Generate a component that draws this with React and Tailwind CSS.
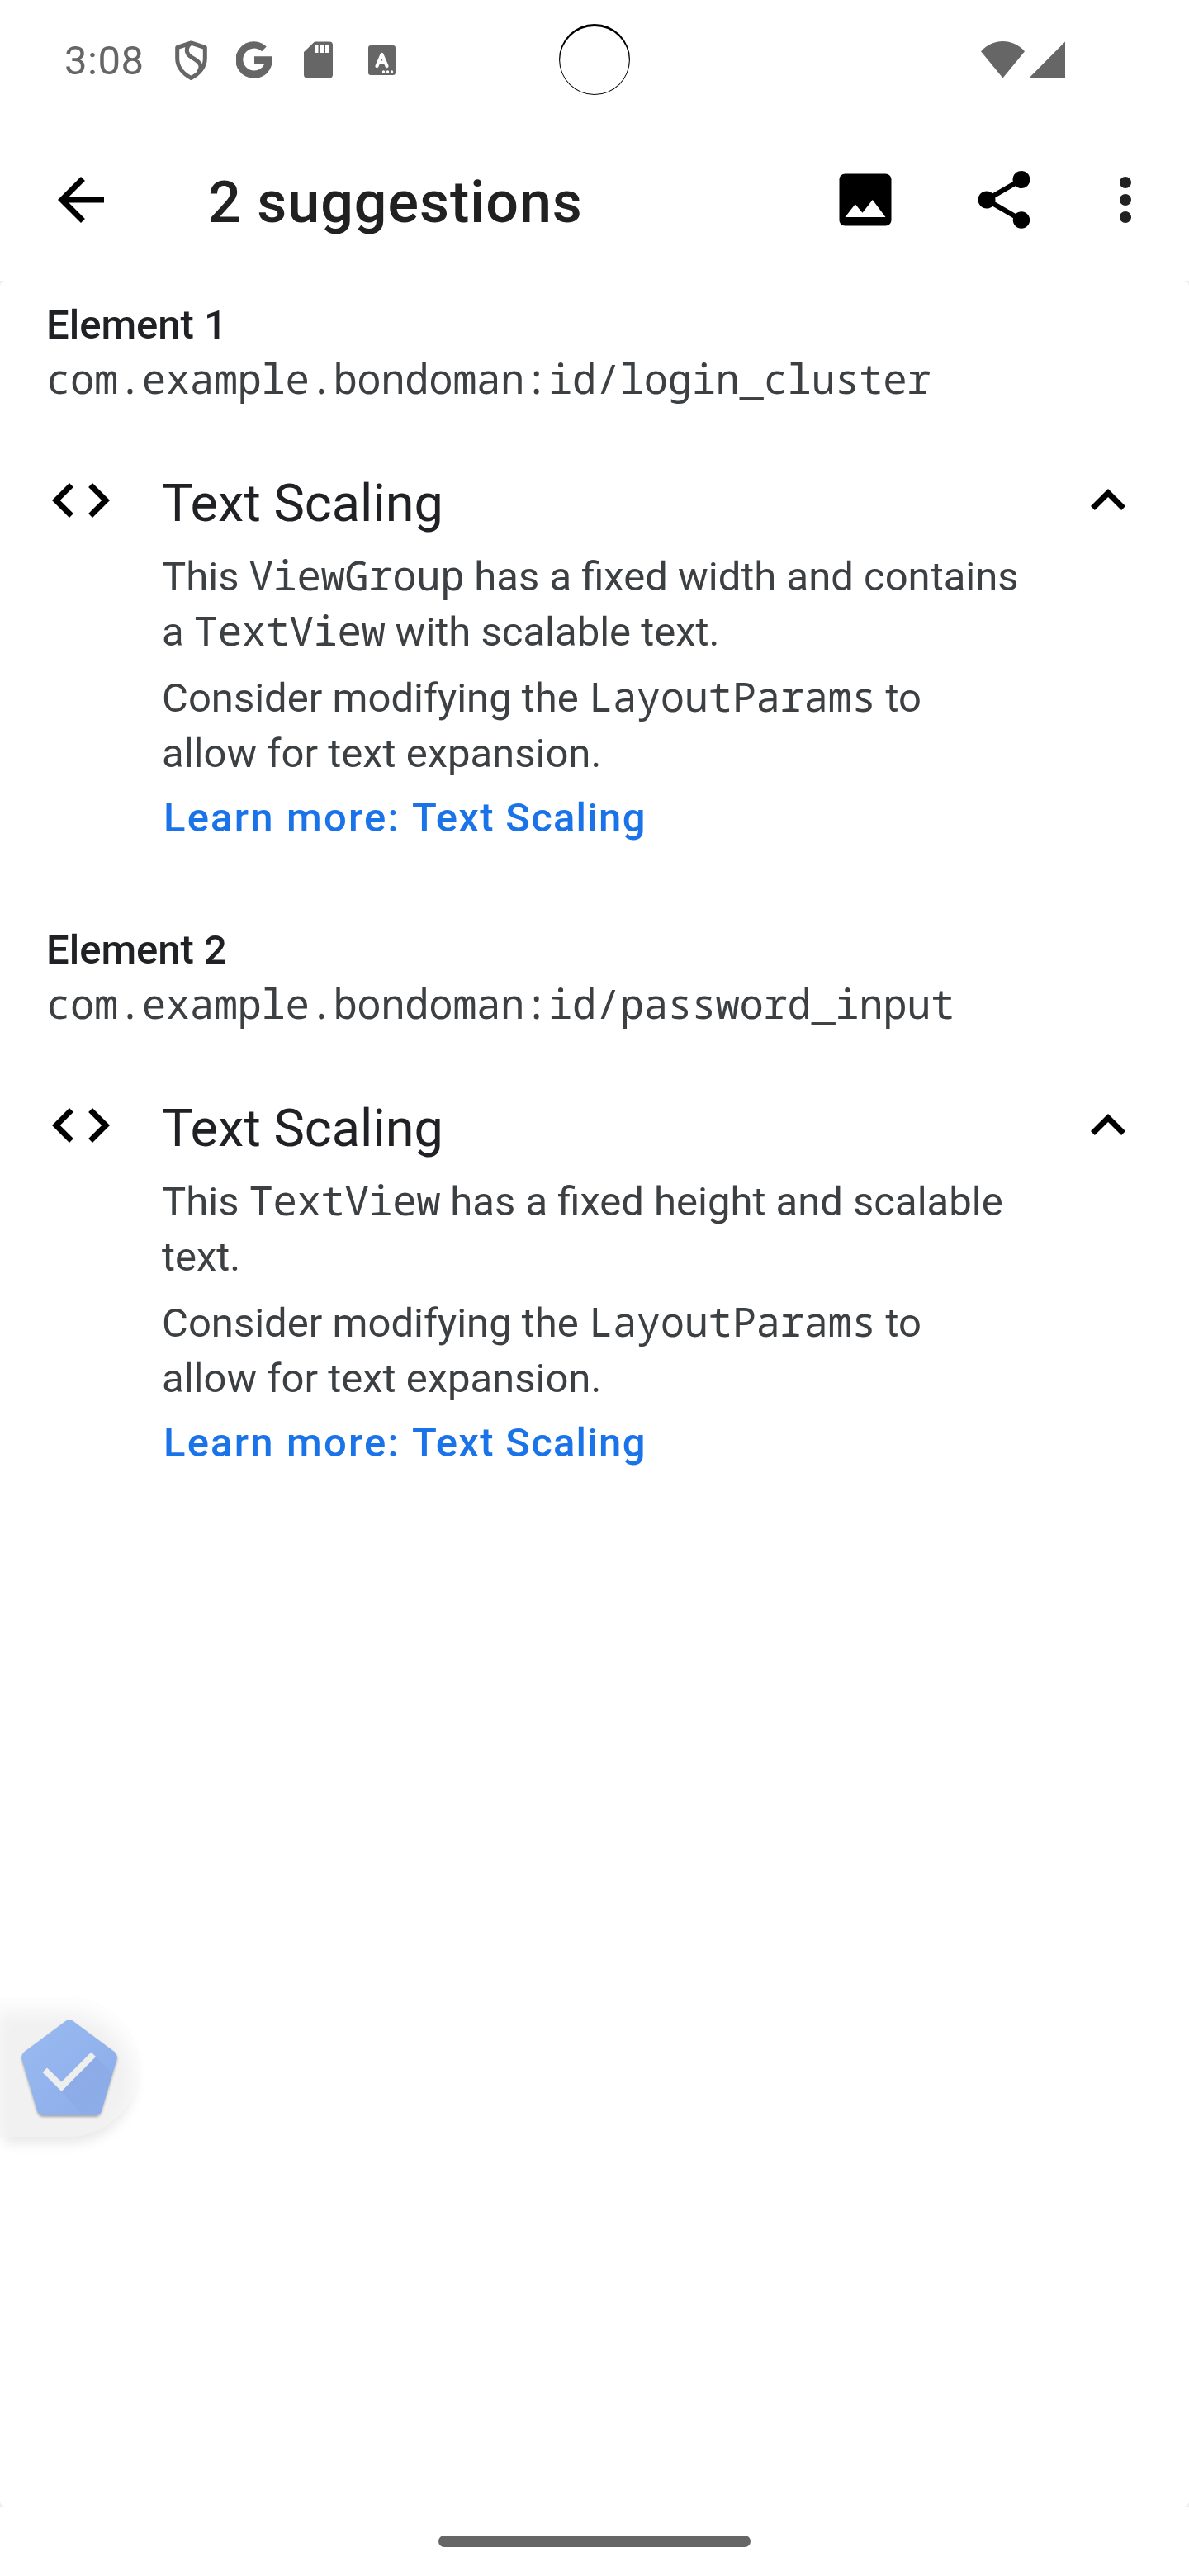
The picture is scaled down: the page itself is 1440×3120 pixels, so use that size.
function Icon({ d, className = "fill-black" }) {
  return (
    <svg viewBox="0 0 24 24" className={"size-[84px] shrink-0 " + className}>
      <path d={d} />
    </svg>
  );
}

function Code({ children }) {
  return (
    <span className="font-['Droid_Sans_Mono','Noto_Sans_Mono','DejaVu_Sans_Mono',monospace] text-[49px] leading-none tracking-[-0.45px]">{children}</span>
  );
}

function StatusBar() {
  return (
    <div className="relative flex h-[145px] items-center pl-[78px] text-[#666]">
      <span className="w-[134px] pt-px text-[49px] leading-[57px] tracking-[0.5px]">3:08</span>
      <svg viewBox="0 0 39 48" className="h-12 w-[39px]" fill="none" stroke="currentColor" strokeWidth="5" strokeLinejoin="round">
        <path d="M19.5 3 36.300 8.500V22c0 10-7 18.500-16.800 23.500C9.700 40.500 2.700 32 2.700 22V8.500z" />
        <path d="M19 3.500c-5 3-6 9-3 13.500 4 5 14 7 15 14 .3 3-.8 5-2.500 7" />
      </svg>
      <svg viewBox="0 0 44 45" className="ml-[35px] h-[45px] w-11 fill-current">
        <path d="M36.700 6.400 31 12.200A13.500 13.500 0 1 0 34.400 27H22V18.300H43.600C45.500 33 36 44.700 22.200 44.700A22.200 22.200 0 1 1 36.700 6.400z" />
      </svg>
      <svg viewBox="0 0 35 45" className="ml-[38px] h-[45px] w-[35px] fill-current">
        <path fillRule="evenodd" d="M13 .5H31a4 4 0 0 1 4 4V40.500a4 4 0 0 1-4 4H4a4 4 0 0 1-4-4V13zM13 5V14h4.500V5zM19.500 5V14H24V5zM26 5V14h4.500V5z" />
      </svg>
      <svg viewBox="0 0 33 36" className="ml-[43px] h-9 w-[33px]">
        <rect width="33" height="36" rx="3" fill="currentColor" />
        <path d="M10.500 25 16.500 11 22.500 25M13 20.500H20" fill="none" stroke="#fff" strokeWidth="4.200" strokeLinecap="round" strokeLinejoin="round" />
        <g fill="#fff"><circle cx="18.500" cy="32" r="1.700" /><circle cx="23.500" cy="32" r="1.700" /><circle cx="28.500" cy="32" r="1.700" /></g>
      </svg>
      <svg viewBox="0 0 86 86" className="absolute top-[29px] left-[677px] size-[86px] fill-black">
        <path fillRule="evenodd" d="M43 0a43 43 0 1 0 0 86 43 43 0 1 0 0-86zM43 3a41.800 41 0 1 1 0 82 41.800 41 0 1 1 0-82z" />
      </svg>
      <svg viewBox="0 0 102 45" className="ml-[709px] h-[45px] w-[102px] fill-current">
        <path d="M0 12.200C15-4 38-4 53 12.200L26.500 44.500z" />
        <path d="M58 44.700 102 .5V44.700z" />
      </svg>
    </div>
  );
}

function AppBar() {
  return (
    <header className="flex h-[195px] items-start pt-[55px] pl-14">
      <Icon d="M20 11H7.830l5.590-5.590L12 4l-8 8 8 8 1.410-1.410L7.830 13H20v-2z" />
      <h1 className="ml-[112px] w-[754px] pt-[4px] text-[70px] leading-[82px] font-medium tracking-[1px] text-[#212121]">2 suggestions</h1>
      <Icon d="M21 19V5c0-1.100-.9-2-2-2H5c-1.100 0-2 .9-2 2v14c0 1.100.9 2 2 2h14c1.100 0 2-.9 2-2zM8.500 13.500l2.500 3.010L14.500 12l4.500 6H5l3.500-4.500z" />
      <Icon className="ml-[84px] fill-black" d="M18 16.080c-.76 0-1.440.3-1.960.77L8.910 12.700c.05-.23.09-.46.09-.7s-.04-.47-.09-.7l7.050-4.110c.54.5 1.250.81 2.040.81 1.660 0 3-1.340 3-3s-1.340-3-3-3-3 1.340-3 3c0 .24.04.47.09.7L8.040 9.810C7.500 9.310 6.790 9 6 9c-1.660 0-3 1.340-3 3s1.340 3 3 3c.79 0 1.500-.31 2.040-.81l7.120 4.160c-.05.21-.08.43-.08.65 0 1.610 1.310 2.920 2.920 2.920 1.610 0 2.920-1.310 2.920-2.920s-1.310-2.920-2.920-2.920z" />
      <Icon className="ml-[63px] fill-[#212121]" d="M12 8c1.100 0 2-.9 2-2s-.9-2-2-2-2 .9-2 2 .9 2 2 2zm0 2c-1.100 0-2 .9-2 2s.9 2 2 2 2-.9 2-2-.9-2-2-2zm0 6c-1.100 0-2 .9-2 2s.9 2 2 2 2-.9 2-2-.9-2-2-2z" />
    </header>
  );
}

function Suggestion({ title, resource, children }) {
  return (
    <section className="flex h-[757px] flex-col">
      <h2 className="pt-[20px] pl-14 text-[49px] leading-[67px] font-medium text-[#202124]">{title}</h2>
      <p className="pl-14 text-[49px] leading-[67px] text-[#3c4043]"><Code>{resource}</Code></p>
      <div className="flex items-start pt-[70px] pl-14">
        <Icon d="M9.400 16.600L4.800 12l4.600-4.600L8 6l-6 6 6 6 1.400-1.400zm5.200 0l4.600-4.600-4.600-4.600L16 6l6 6-6 6-1.400-1.400z" />
        <div className="ml-14 w-[1104px]">
          <h3 className="pt-[5px] text-[63px] leading-[82px] text-[#202124]">Text Scaling</h3>
          <div className="text-[49px] leading-[67px] whitespace-nowrap text-[#3c4043]">
            <p className="pt-[14px]">{children}</p>
            <p className="pt-[13px]">Consider modifying the <Code>LayoutParams</Code> to<br />allow for text expansion.</p>
          </div>
          <a className="block pt-[11px] pl-[2px] text-[49px] leading-[67px] font-medium tracking-[2.2px] text-[#1a73e8]">Learn more: <span className="tracking-[1.25px]">Text Scaling</span></a>
        </div>
        <Icon d="M12 8l-6 6 1.410 1.410L12 10.830l4.590 4.580L18 14z" />
      </div>
    </section>
  );
}

function FloatingCheck() {
  return (
    <div className="absolute top-[2419px] left-0 h-[169px] w-[168px] rounded-r-full bg-[#f1f1f1] shadow-[0_12px_16px_-5px_rgba(0,0,0,0.1),inset_-5px_18px_22px_rgba(255,255,255,0.9)]">
      <svg viewBox="0 0 168 169" className="size-full overflow-visible">
        <defs>
          <linearGradient id="face" x1="0" y1="0" x2="1" y2="1">
            <stop offset="0" stopColor="#9abaf0" />
            <stop offset="1" stopColor="#8aacea" />
          </linearGradient>
          <linearGradient id="cast" gradientUnits="userSpaceOnUse" x1="90" y1="90" x2="125" y2="130">
            <stop offset="0" stopColor="#8dabe7" />
            <stop offset="1" stopColor="#8cade9" />
          </linearGradient>
        </defs>
        <path className="drop-shadow-[0_2px_1.500px_rgba(0,0,0,0.3)]" fill="url(#face)" d="M80 28.500Q84 25.500 88 28.500L138.500 66Q143 70 141.500 75L123 137Q121 143 115 143H53Q47 143 45 137L26.500 75Q25 70 29.500 66z" />
        <path fill="url(#cast)" d="M116 72 136 92 123 137Q121 143 115 143H101L74.500 114z" />
        <path fill="#eee" d="M51.500 91 57 85.500 74.500 102.500 110.500 66.500 116 72 74.500 114z" />
      </svg>
    </div>
  );
}

export default function App() {
  return (
    <div className="relative flex h-[3120px] w-[1440px] flex-col overflow-hidden bg-white font-[Roboto,sans-serif]">
      <StatusBar />
      <AppBar />
      <div className="h-[2696px] bg-[#eee]">
        <main className="h-full rounded-[7px] bg-white">
          <Suggestion title="Element 1" resource="com.example.bondoman:id/login_cluster">
            This <Code>ViewGroup</Code> has a fixed width and contains<br />a <Code>TextView</Code> with scalable text.
          </Suggestion>
          <Suggestion title="Element 2" resource="com.example.bondoman:id/password_input">
            This <Code>TextView</Code> has a fixed height and scalable<br />text.
          </Suggestion>
        </main>
      </div>
      <FloatingCheck />
      <div className="mx-auto mt-[35px] h-[14px] w-[378px] rounded-full bg-[#666]" />
    </div>
  );
}
